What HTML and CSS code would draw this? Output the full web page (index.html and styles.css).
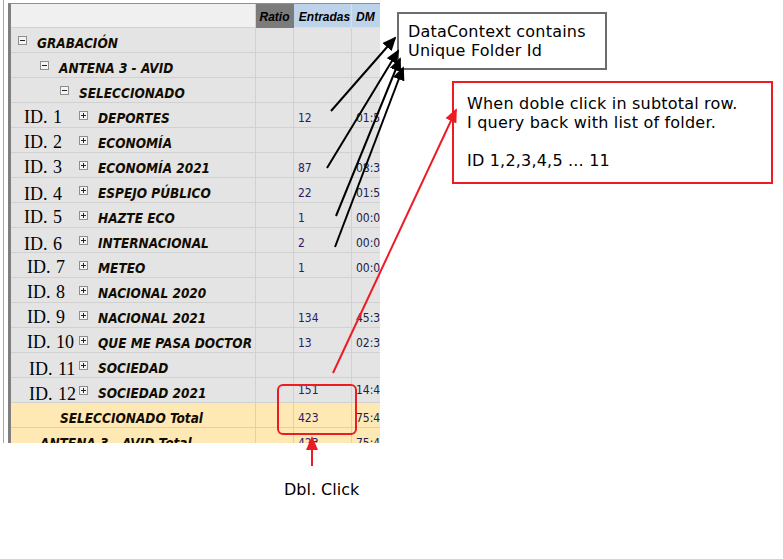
FILE: index.html
```html
<!DOCTYPE html>
<html lang="en">
<head>
    <meta charset="UTF-8">
    <meta name="viewport" content="width=device-width, initial-scale=1.0">
    <title>Folder Grid</title>
    <link rel="stylesheet" href="styles.css">
</head>
<body>
    <div class="panel">
        <div class="grid">
            <div class="row head">
                <div class="cell name"></div>
                <div class="cell ratio">Ratio</div>
                <div class="cell ent">Entradas</div>
                <div class="cell dm">DM</div>
            </div>

            <div class="row">
                <div class="cell name lvl1"><span class="exp"></span><b>GRABACIÓN</b></div>
                <div class="cell ratio"></div><div class="cell ent"></div><div class="cell dm"></div>
            </div>
            <div class="row">
                <div class="cell name lvl2"><span class="exp"></span><b>ANTENA 3 - AVID</b></div>
                <div class="cell ratio"></div><div class="cell ent"></div><div class="cell dm"></div>
            </div>
            <div class="row">
                <div class="cell name lvl3"><span class="exp"></span><b>SELECCIONADO</b></div>
                <div class="cell ratio"></div><div class="cell ent"></div><div class="cell dm"></div>
            </div>

            <div class="row">
                <div class="cell name"><span class="id">ID. 1</span><span class="exp plus"></span><b>DEPORTES</b></div>
                <div class="cell ratio"></div><div class="cell ent">12</div><div class="cell dm">01:57</div>
            </div>
            <div class="row">
                <div class="cell name"><span class="id">ID. 2</span><span class="exp plus"></span><b>ECONOMÍA</b></div>
                <div class="cell ratio"></div><div class="cell ent"></div><div class="cell dm"></div>
            </div>
            <div class="row">
                <div class="cell name"><span class="id">ID. 3</span><span class="exp plus"></span><b>ECONOMÍA 2021</b></div>
                <div class="cell ratio"></div><div class="cell ent">87</div><div class="cell dm">08:39</div>
            </div>
            <div class="row">
                <div class="cell name"><span class="id low">ID. 4</span><span class="exp plus"></span><b>ESPEJO PÚBLICO</b></div>
                <div class="cell ratio"></div><div class="cell ent">22</div><div class="cell dm">01:54</div>
            </div>
            <div class="row">
                <div class="cell name"><span class="id">ID. 5</span><span class="exp plus"></span><b>HAZTE ECO</b></div>
                <div class="cell ratio"></div><div class="cell ent">1</div><div class="cell dm">00:09</div>
            </div>
            <div class="row">
                <div class="cell name"><span class="id low">ID. 6</span><span class="exp plus"></span><b>INTERNACIONAL</b></div>
                <div class="cell ratio"></div><div class="cell ent">2</div><div class="cell dm">00:04</div>
            </div>
            <div class="row">
                <div class="cell name"><span class="id mid">ID. 7</span><span class="exp plus"></span><b>METEO</b></div>
                <div class="cell ratio"></div><div class="cell ent">1</div><div class="cell dm">00:02</div>
            </div>
            <div class="row">
                <div class="cell name"><span class="id mid">ID. 8</span><span class="exp plus"></span><b>NACIONAL 2020</b></div>
                <div class="cell ratio"></div><div class="cell ent"></div><div class="cell dm"></div>
            </div>
            <div class="row">
                <div class="cell name"><span class="id mid">ID. 9</span><span class="exp plus"></span><b>NACIONAL 2021</b></div>
                <div class="cell ratio"></div><div class="cell ent">134</div><div class="cell dm">45:34</div>
            </div>
            <div class="row">
                <div class="cell name"><span class="id mid">ID. 10</span><span class="exp plus"></span><b>QUE ME PASA DOCTOR</b></div>
                <div class="cell ratio"></div><div class="cell ent">13</div><div class="cell dm">02:32</div>
            </div>
            <div class="row">
                <div class="cell name"><span class="id far low">ID. 11</span><span class="exp plus"></span><b>SOCIEDAD</b></div>
                <div class="cell ratio"></div><div class="cell ent"></div><div class="cell dm"></div>
            </div>
            <div class="row">
                <div class="cell name"><span class="id far low">ID. 12</span><span class="exp plus"></span><b>SOCIEDAD 2021</b></div>
                <div class="cell ratio"></div><div class="cell ent up">151</div><div class="cell dm up">14:49</div>
            </div>

            <div class="row total">
                <div class="cell name sub3"><b>SELECCIONADO Total</b></div>
                <div class="cell ratio"></div><div class="cell ent">423</div><div class="cell dm">75:40</div>
            </div>
            <div class="row total">
                <div class="cell name sub2"><b>ANTENA 3 - AVID Total</b></div>
                <div class="cell ratio"></div><div class="cell ent">423</div><div class="cell dm">75:40</div>
            </div>
        </div>
    </div>

    <div class="note note-grey">DataContext contains<br>Unique Folder Id</div>
    <div class="note note-red">When doble click in subtotal row.<br>I query back with list of folder.<br><br>ID 1,2,3,4,5 ... 11</div>
    <div class="mark"></div>
    <div class="caption">Dbl. Click</div>

    <svg class="arrows" width="783" height="559" viewBox="0 0 783 559">
        <defs>
            <marker id="headBlack" markerWidth="7" markerHeight="6" refX="6" refY="3" orient="auto" markerUnits="strokeWidth">
                <path d="M0,0 L7,3 L0,6 Z" fill="#000"/>
            </marker>
            <marker id="headRed" markerWidth="7" markerHeight="6" refX="6" refY="3" orient="auto" markerUnits="strokeWidth">
                <path d="M0,0 L7,3 L0,6 Z" fill="#ed1c24"/>
            </marker>
        </defs>
        <g stroke="#000" stroke-width="2" fill="none">
            <line x1="331" y1="111" x2="395" y2="38" marker-end="url(#headBlack)"/>
            <line x1="327" y1="168" x2="398" y2="51" marker-end="url(#headBlack)"/>
            <line x1="336" y1="216" x2="400" y2="59" marker-end="url(#headBlack)"/>
            <line x1="335" y1="247" x2="403" y2="68" marker-end="url(#headBlack)"/>
        </g>
        <g stroke="#ed1c24" stroke-width="2" fill="none">
            <line x1="333" y1="373" x2="456" y2="110" marker-end="url(#headRed)"/>
            <line x1="312" y1="466" x2="312" y2="438" marker-end="url(#headRed)"/>
        </g>
    </svg>
</body>
</html>
```

FILE: styles.css
```css
body {
    margin: 0;
    background: #fff;
    font-family: "DejaVu Sans", Verdana, sans-serif;
    width: 783px;
    height: 559px;
    overflow: hidden;
}
.panel {
    margin-left: 3px;
    border-left: 1px solid #a8a8a8;
    padding: 3px 0 0 4px;
    width: 373px;
}
.grid {
    border-left: 3px solid #7f7f7f;
    border-top: 1px solid #8f8f8f;
    width: 369px;
    height: 439px;
    overflow: hidden;
    background: #fff;
}
.row {
    display: flex;
    height: 25px;
    background: #e4e4e4;
}
.cell {
    box-sizing: border-box;
    height: 25px;
    padding-top: 5px;
    border-right: 1px solid #d1d1d1;
    border-bottom: 1px solid #d1d1d1;
    display: flex;
    align-items: center;
    flex-shrink: 0;
    white-space: nowrap;
}
.cell.name { width: 245px; }
.cell.ratio { width: 38px; }
.cell.ent {
    width: 58px;
    padding-left: 4px;
    font-size: 12px;
    font-stretch: semi-condensed;
    color: #2a1b66;
}
.cell.dm {
    width: 40px;
    padding-left: 4px;
    font-size: 12px;
    font-stretch: semi-condensed;
    color: #20204a;
    border-right: none;
}
.cell.up { padding-top: 0; }

.row.head {
    height: 24px;
}
.head .cell {
    height: 24px;
    padding-top: 2px;
    font-family: "Liberation Sans", Arial, sans-serif;
    font-weight: bold;
    font-style: italic;
    font-size: 12px;
    color: #000;
    justify-content: center;
}
.head .name { background: #f0f0f0; }
.head .ratio { background: #7b7b7b; border-color: #7b7b7b; }
.head .ent, .head .dm { background: #bdd3ea; border-color: #d4e2f0; }
.head .dm { justify-content: flex-start; padding-left: 4px; }

.cell b {
    font-family: "DejaVu Sans Condensed", "DejaVu Sans", sans-serif;
    font-stretch: semi-condensed;
    font-size: 13.5px;
    font-style: italic;
    font-weight: bold;
    color: #120c00;
}
.lvl1 { padding-left: 7px; }
.lvl2 { padding-left: 29px; }
.lvl3 { padding-left: 49px; }
.sub3 { padding-left: 49px; }
.sub2 { padding-left: 29px; }

.exp {
    position: relative;
    box-sizing: border-box;
    width: 9px;
    height: 9px;
    border: 1px solid #8e8e8e;
    background: #f4f4f4;
    margin-right: 10px;
    margin-top: -4px;
}
.exp::before {
    content: "";
    position: absolute;
    left: 1px;
    top: 3px;
    width: 5px;
    height: 1px;
    background: #222;
}
.exp.plus::after {
    content: "";
    position: absolute;
    left: 3px;
    top: 1px;
    width: 1px;
    height: 5px;
    background: #222;
}

.id {
    box-sizing: border-box;
    width: 68px;
    padding-left: 13px;
    font-family: "Liberation Serif", "Times New Roman", serif;
    font-size: 18px;
    color: #000;
    word-spacing: 1px;
}
.id.mid { padding-left: 16px; }
.id.far { padding-left: 18px; }
.id.low { padding-top: 3px; }

.total { background: #fee9b5; }

.note {
    position: absolute;
    box-sizing: border-box;
    font-size: 16px;
    letter-spacing: 0.2px;
    line-height: 19px;
    color: #000;
    background: #fff;
}
.note-grey {
    left: 397px;
    top: 12px;
    width: 210px;
    height: 58px;
    border: 2px solid #6d6d6d;
    padding: 8px 0 0 9px;
}
.note-red {
    left: 452px;
    top: 81px;
    width: 321px;
    height: 103px;
    border: 2px solid #ed1c24;
    padding: 11px 0 0 13px;
}
.mark {
    position: absolute;
    left: 277px;
    top: 384px;
    width: 80px;
    height: 51px;
    box-sizing: border-box;
    border: 2px solid #ed1c24;
    border-radius: 6px;
}
.caption {
    position: absolute;
    left: 284px;
    top: 480px;
    font-size: 16px;
    line-height: 20px;
    color: #000;
}
.arrows {
    position: absolute;
    left: 0;
    top: 0;
    pointer-events: none;
}
```
